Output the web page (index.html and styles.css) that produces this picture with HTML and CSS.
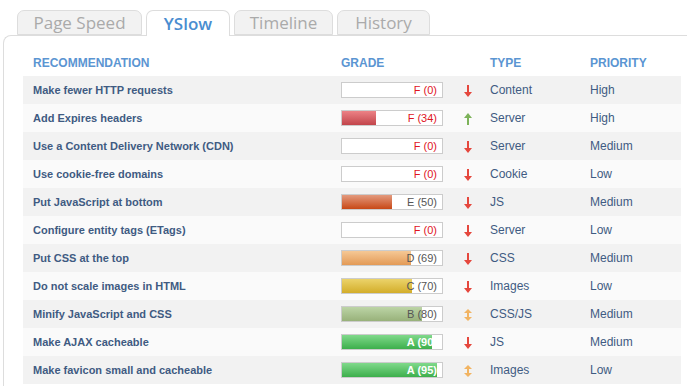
FILE: index.html
```html
<!DOCTYPE html>
<html>
	<head>
		<meta charset="utf-8" />
		<link rel="stylesheet" href="styles.css">
	</head>

	<body>
		<nav class="tabs">
			<a href="#" class="tab tab-pagespeed">Page Speed</a>
			<a href="#" class="tab tab-yslow active">YSlow</a>
			<a href="#" class="tab tab-timeline">Timeline</a>
			<a href="#" class="tab tab-history">History</a>
		</nav>

		<section class="panel">
			<table class="grades">
				<thead>
					<tr>
						<th class="col-rec">Recommendation</th>
						<th class="col-grade">Grade</th>
						<th class="col-trend"></th>
						<th class="col-type">Type</th>
						<th class="col-prio">Priority</th>
					</tr>
				</thead>

				<tbody>
					<tr>
						<td class="rec">Make fewer HTTP requests</td>
						<td><div class="bar grade-f"><span class="fill" style="width:0%"></span><span class="score">F (0)</span></div></td>
						<td class="trend"><svg class="arrow down" viewBox="0 0 8 12"><path d="M3 0h2v7h3l-4 5-4-5h3z"/></svg></td>
						<td>Content</td>
						<td>High</td>
					</tr>
					<tr>
						<td class="rec">Add Expires headers</td>
						<td><div class="bar grade-f"><span class="fill" style="width:34%"></span><span class="score">F (34)</span></div></td>
						<td class="trend"><svg class="arrow up" viewBox="0 0 8 12"><path d="M3 12h2V5h3L4 0 0 5h3z"/></svg></td>
						<td>Server</td>
						<td>High</td>
					</tr>
					<tr>
						<td class="rec">Use a Content Delivery Network (CDN)</td>
						<td><div class="bar grade-f"><span class="fill" style="width:0%"></span><span class="score">F (0)</span></div></td>
						<td class="trend"><svg class="arrow down" viewBox="0 0 8 12"><path d="M3 0h2v7h3l-4 5-4-5h3z"/></svg></td>
						<td>Server</td>
						<td>Medium</td>
					</tr>
					<tr>
						<td class="rec">Use cookie-free domains</td>
						<td><div class="bar grade-f"><span class="fill" style="width:0%"></span><span class="score">F (0)</span></div></td>
						<td class="trend"><svg class="arrow down" viewBox="0 0 8 12"><path d="M3 0h2v7h3l-4 5-4-5h3z"/></svg></td>
						<td>Cookie</td>
						<td>Low</td>
					</tr>
					<tr>
						<td class="rec">Put JavaScript at bottom</td>
						<td><div class="bar grade-e"><span class="fill" style="width:50%"></span><span class="score">E (50)</span></div></td>
						<td class="trend"><svg class="arrow down" viewBox="0 0 8 12"><path d="M3 0h2v7h3l-4 5-4-5h3z"/></svg></td>
						<td>JS</td>
						<td>Medium</td>
					</tr>
					<tr>
						<td class="rec">Configure entity tags (ETags)</td>
						<td><div class="bar grade-f"><span class="fill" style="width:0%"></span><span class="score">F (0)</span></div></td>
						<td class="trend"><svg class="arrow down" viewBox="0 0 8 12"><path d="M3 0h2v7h3l-4 5-4-5h3z"/></svg></td>
						<td>Server</td>
						<td>Low</td>
					</tr>
					<tr>
						<td class="rec">Put CSS at the top</td>
						<td><div class="bar grade-d"><span class="fill" style="width:69%"></span><span class="score">D (69)</span></div></td>
						<td class="trend"><svg class="arrow down" viewBox="0 0 8 12"><path d="M3 0h2v7h3l-4 5-4-5h3z"/></svg></td>
						<td>CSS</td>
						<td>Medium</td>
					</tr>
					<tr>
						<td class="rec">Do not scale images in HTML</td>
						<td><div class="bar grade-c"><span class="fill" style="width:70%"></span><span class="score">C (70)</span></div></td>
						<td class="trend"><svg class="arrow down" viewBox="0 0 8 12"><path d="M3 0h2v7h3l-4 5-4-5h3z"/></svg></td>
						<td>Images</td>
						<td>Low</td>
					</tr>
					<tr>
						<td class="rec">Minify JavaScript and CSS</td>
						<td><div class="bar grade-b"><span class="fill" style="width:80%"></span><span class="score">B (80)</span></div></td>
						<td class="trend"><svg class="arrow same" viewBox="0 0 8 12"><path d="M4 0l4 4H5v4h3l-4 4-4-4h3V4H0z"/></svg></td>
						<td>CSS/JS</td>
						<td>Medium</td>
					</tr>
					<tr>
						<td class="rec">Make AJAX cacheable</td>
						<td><div class="bar grade-a"><span class="score">A (90)</span><span class="rest" style="width:10%"></span></div></td>
						<td class="trend"><svg class="arrow down" viewBox="0 0 8 12"><path d="M3 0h2v7h3l-4 5-4-5h3z"/></svg></td>
						<td>JS</td>
						<td>Medium</td>
					</tr>
					<tr>
						<td class="rec">Make favicon small and cacheable</td>
						<td><div class="bar grade-a"><span class="score">A (95)</span><span class="rest" style="width:5%"></span></div></td>
						<td class="trend"><svg class="arrow same" viewBox="0 0 8 12"><path d="M4 0l4 4H5v4h3l-4 4-4-4h3V4H0z"/></svg></td>
						<td>Images</td>
						<td>Low</td>
					</tr>
				</tbody>
			</table>
		</section>
	</body>
</html>
```

FILE: styles.css
```css
html, body {
	margin:   0;
	overflow: hidden;
}

body {
	font-family: "Liberation Sans", Arial, sans-serif;
	background:  #fff;
	width:  687px;
	height: 386px;
}



/**
 * Tab strip
 */
.tabs {
	display:  flex;
	gap:      4px;
	padding:  10px 0 0 17px;
	height:   25px;
	position: relative;
	z-index:  1;
}

.tab {
	box-sizing:  border-box;
	height:      25px;
	display:     flex;
	align-items: center;
	justify-content: center;

	font-family: "Open Sans", sans-serif;
	font-size:   17px;
	color:       #aaa;
	text-decoration: none;

	background:    #f2f2f2;
	border:        1px solid #ddd;
	border-radius: 7px 7px 0 0;
}

.tab-pagespeed { width: 125px; }
.tab-yslow     { width: 84px;  }
.tab-timeline  { width: 99px;  }
.tab-history   { width: 93px;  }

.tab.active {
	height:        26px;
	background:    #fff;
	border-bottom: none;
	color:         #4a8dd0;
	font-weight:   600;
}



/**
 * Content panel (its right and bottom sides run past the window)
 */
.panel {
	box-sizing:    border-box;
	margin-left:   3px;
	width:         684px;
	height:        351px;
	padding:       13px 0 0 19px;

	border:        1px solid #ddd;
	border-right:  none;
	border-bottom: none;
	border-radius: 8px 0 0 0;
}

.grades {
	width:           658px;
	border-collapse: collapse;
	table-layout:    fixed;
}

/* widths without the 10px left padding */
.col-rec   { width: 298px; }
.col-grade { width: 114px; }
.col-trend { width: 25px;  }
.col-type  { width: 90px;  }
.col-prio  { width: 91px;  }

.grades th {
	height:      27px;
	padding:     0 0 0 10px;
	text-align:  left;
	font-size:   12px;
	font-weight: bold;
	text-transform: uppercase;
	color:       #5b95d2;
}

.grades th.col-trend {
	padding: 0;
}

.grades td {
	height:    28px;
	padding:   0 0 0 10px;
	font-size: 12px;
	color:     #3f5b82;
}

.grades tbody tr:nth-child(odd)  { background: #f2f2f2; }
.grades tbody tr:nth-child(even) { background: #fafafa; }

.grades td.rec {
	font-size:   11px;
	font-weight: bold;
}

.grades td.trend {
	padding:    0;
	text-align: center;
}



/**
 * Grade bars
 */
.bar {
	box-sizing: border-box;
	width:      102px;
	height:     16px;
	border:     1px solid #ccc;
	background: #fff;
	position:   relative;
	display:    flex;
	overflow:   hidden;
}

.bar .fill {
	display: block;
	height:  100%;
}

.bar .score {
	position:  absolute;
	right:     5px;
	top:       0;
	line-height: 14px;
	font-size: 11px;
	color:     #555;
}

.grade-f .score { color: #e0141e; }
.grade-f .fill  { background: linear-gradient(#ec8286, #c2454b); }
.grade-e .fill  { background: linear-gradient(#e39a7e, #c84816); }
.grade-d .fill  { background: linear-gradient(#f5c895, #e39a56); }
.grade-c .fill  { background: linear-gradient(#ebd36a, #d3ad2a); }
.grade-b .fill  { background: linear-gradient(#bcd4a6, #98b17a); }

.grade-a {
	background: linear-gradient(#80d98b, #3daf4c);
	justify-content: flex-end;
}
.grade-a .score {
	color:       #fff;
	font-weight: bold;
}
.grade-a .rest {
	display:    block;
	height:     100%;
	background: #fff;
	position:   relative;
	z-index:    1;
}



/**
 * Trend arrows
 */
.arrow {
	width:  8px;
	height: 12px;
	vertical-align: middle;
}
.arrow.down { fill: #e5473d; }
.arrow.up   { fill: #7db35a; }
.arrow.same { fill: #f2b462; }
```
